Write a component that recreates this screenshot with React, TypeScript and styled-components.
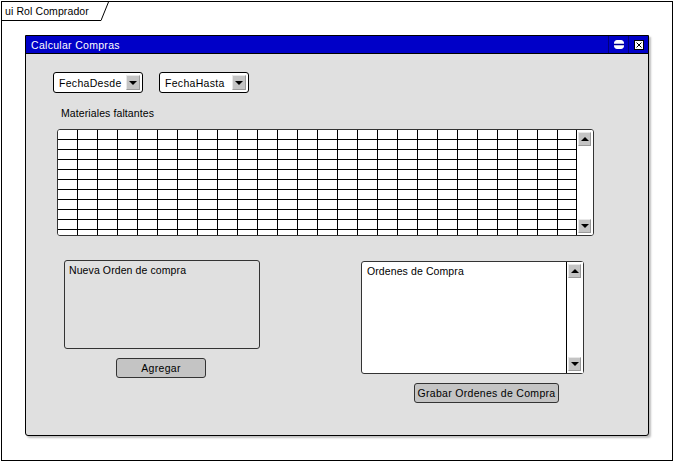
import styled, { createGlobalStyle } from 'styled-components';

const GlobalStyle = createGlobalStyle`
  html, body {
    margin: 0;
    padding: 0;
    background: #fff;
  }
  body {
    font-family: "Liberation Sans", Arial, sans-serif;
    font-size: 10.5px;
    letter-spacing: 0.1px;
    color: #000;
  }
`;

const Frame = styled.div`
  box-sizing: border-box;
  margin: 1px 0 0 1px;
  width: 672px;
  height: 460px;
  border: 1px solid #000;
`;

const TabRow = styled.div`
  display: flex;
  align-items: stretch;
  height: 19px;
`;

const TabLabel = styled.div`
  box-sizing: border-box;
  width: 99px;
  padding: 3px 0 0 3px;
  border-bottom: 1px solid #000;
  white-space: nowrap;
`;

const Window = styled.div`
  box-sizing: border-box;
  margin: 14px 0 0 23px;
  width: 624px;
  height: 401px;
  border: 1px solid #000;
  border-radius: 0 0 3px 3px;
  background: #e0e0e0;
  box-shadow: 2px 2px 2px rgba(0, 0, 0, 0.25);
  display: flex;
  flex-direction: column;
`;

const TitleBar = styled.div`
  display: flex;
  align-items: stretch;
  height: 17px;
  background: #0000c8;
  color: #fff;
  border-bottom: 1px solid #000;
`;

const Title = styled.div`
  flex: 1;
  padding: 3px 0 0 5px;
  letter-spacing: 0.3px;
`;

const TitleButton = styled.div`
  width: 19px;
  border-left: 1px solid #00007a;
  display: flex;
  align-items: center;
  justify-content: center;
`;

const Body = styled.div`
  flex: 1;
  padding: 18px 0 0 27px;
  display: flex;
  flex-direction: column;
`;

const DateRow = styled.div`
  display: flex;
  gap: 16px;
`;

const Select = styled.div`
  box-sizing: border-box;
  width: 90px;
  height: 21px;
  background: #fff;
  border: 1px solid #000;
  border-radius: 3px;
  display: flex;
  align-items: center;
  padding: 0 1px 0 5px;
  white-space: nowrap;
  letter-spacing: 0.3px;
`;

const SelectText = styled.span`
  flex: 1;
`;

const ArrowButton = styled.div<{ $w?: number; $h?: number }>`
  box-sizing: border-box;
  width: ${(p) => p.$w ?? 14}px;
  height: ${(p) => p.$h ?? 15}px;
  background: #c4c4c4;
  border: 1px solid #9a9a9a;
  border-top-color: #e8e8e8;
  border-left-color: #e8e8e8;
  display: flex;
  align-items: center;
  justify-content: center;
  margin-right: 1px;
  flex-shrink: 0;
`;

const Triangle = styled.div<{ $up?: boolean }>`
  width: 0;
  height: 0;
  border-left: 4px solid transparent;
  border-right: 4px solid transparent;
  ${(p) => (p.$up ? 'border-bottom: 4px solid #000;' : 'border-top: 4px solid #000;')}
`;

const SectionLabel = styled.div`
  margin: 14px 0 0 8px;
`;

const GridBox = styled.div`
  box-sizing: border-box;
  margin: 10px 0 0 4px;
  width: 537px;
  height: 107px;
  border: 1px solid #333;
  border-radius: 3px;
  background: #fff;
  display: flex;
  overflow: hidden;
`;

const GridLines = styled.div`
  flex: 1;
  background-color: #fff;
  background-image:
    repeating-linear-gradient(to right, transparent 0 19px, #000 19px 20px),
    repeating-linear-gradient(to bottom, transparent 0 9px, #000 9px 10px);
`;

const VScroll = styled.div`
  width: 16px;
  border-left: 1px solid #000;
  background: #fff;
  display: flex;
  flex-direction: column;
  justify-content: space-between;
  align-items: center;
  padding: 2px 0;
`;

const Lower = styled.div`
  display: flex;
  margin-top: 24px;
`;

const LeftCol = styled.div`
  display: flex;
  flex-direction: column;
  margin-left: 11px;
`;

const RightCol = styled.div`
  display: flex;
  flex-direction: column;
  margin-left: 101px;
`;

const Panel = styled.div<{ $w: number; $h: number }>`
  box-sizing: border-box;
  width: ${(p) => p.$w}px;
  height: ${(p) => p.$h}px;
  border: 1px solid #333;
  border-radius: 3px;
  white-space: nowrap;
`;

const NewOrder = styled(Panel)`
  padding: 3px 0 0 4px;
`;

const OrderList = styled(Panel)`
  margin-top: 1px;
  background: #fff;
  display: flex;
`;

const ListText = styled.div`
  flex: 1;
  padding: 3px 0 0 5px;
`;

const Button = styled.div<{ $w: number; $ml: number; $mt: number }>`
  box-sizing: border-box;
  width: ${(p) => p.$w}px;
  height: 20px;
  margin: ${(p) => p.$mt}px 0 0 ${(p) => p.$ml}px;
  background: #c4c4c4;
  border: 1px solid #333;
  border-radius: 3px;
  display: flex;
  align-items: center;
  justify-content: center;
  white-space: nowrap;
  letter-spacing: 0.3px;
`;

const App = () => {
  return (
    <>
      <GlobalStyle />
      <Frame>
        <TabRow>
          <TabLabel>ui Rol Comprador</TabLabel>
          <svg width="9" height="19" viewBox="0 0 9 19">
            <line x1="0" y1="18.5" x2="7.5" y2="0" stroke="#000" strokeWidth="1" />
          </svg>
        </TabRow>
        <Window>
          <TitleBar>
            <Title>Calcular Compras</Title>
            <TitleButton>
              <svg width="10" height="9" viewBox="0 0 10 9">
                <rect x="0.5" y="0.5" width="9" height="8" rx="2.5" fill="#fff" stroke="#fff" />
                <line x1="0" y1="4.5" x2="10" y2="4.5" stroke="#000090" strokeWidth="1.5" />
              </svg>
            </TitleButton>
            <TitleButton>
              <svg width="10" height="10" viewBox="0 0 10 10">
                <rect x="0.5" y="0.5" width="9" height="9" fill="#fff" stroke="#000" />
                <path d="M2.5 2.5 L7.5 7.5 M7.5 2.5 L2.5 7.5" stroke="#000" strokeWidth="1" />
              </svg>
            </TitleButton>
          </TitleBar>
          <Body>
            <DateRow>
              <Select>
                <SelectText>FechaDesde</SelectText>
                <ArrowButton>
                  <Triangle />
                </ArrowButton>
              </Select>
              <Select>
                <SelectText>FechaHasta</SelectText>
                <ArrowButton>
                  <Triangle />
                </ArrowButton>
              </Select>
            </DateRow>
            <SectionLabel>Materiales faltantes</SectionLabel>
            <GridBox>
              <GridLines />
              <VScroll>
                <ArrowButton $w={13} $h={14}>
                  <Triangle $up />
                </ArrowButton>
                <ArrowButton $w={13} $h={14}>
                  <Triangle />
                </ArrowButton>
              </VScroll>
            </GridBox>
            <Lower>
              <LeftCol>
                <NewOrder $w={196} $h={89}>Nueva Orden de compra</NewOrder>
                <Button $w={90} $ml={52} $mt={9}>Agregar</Button>
              </LeftCol>
              <RightCol>
                <OrderList $w={223} $h={113}>
                  <ListText>Ordenes de Compra</ListText>
                  <VScroll>
                    <ArrowButton $w={13} $h={14}>
                      <Triangle $up />
                    </ArrowButton>
                    <ArrowButton $w={13} $h={14}>
                      <Triangle />
                    </ArrowButton>
                  </VScroll>
                </OrderList>
                <Button $w={145} $ml={53} $mt={9}>Grabar Ordenes de Compra</Button>
              </RightCol>
            </Lower>
          </Body>
        </Window>
      </Frame>
    </>
  );
};

export default App;
